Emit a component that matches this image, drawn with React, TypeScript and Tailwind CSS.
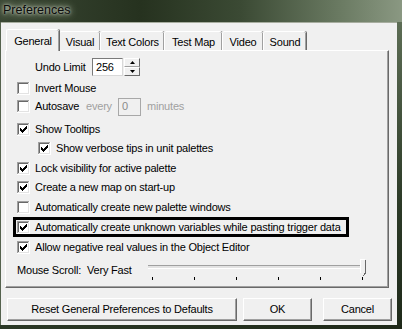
import React from "react";

const F = "font-['Liberation_Sans',Arial,sans-serif]";

function Check({ checked, disabled }: { checked?: boolean; disabled?: boolean }) {
  const rows: [number, number, number][] = [
    [9, 3, 1], [8, 4, 2], [3, 5, 1], [7, 5, 3], [3, 6, 2], [6, 6, 3], [3, 7, 5], [4, 8, 3], [5, 9, 1],
  ];
  return (
    <svg width="13" height="13" viewBox="0 0 13 13" shapeRendering="crispEdges" className="shrink-0">
      <rect x="0" y="0" width="13" height="13" fill="#ffffff" />
      <rect x="0" y="0" width="12" height="1" fill="#a0a0a0" />
      <rect x="0" y="0" width="1" height="12" fill="#a0a0a0" />
      <rect x="1" y="1" width="10" height="1" fill="#696969" />
      <rect x="1" y="1" width="1" height="10" fill="#696969" />
      <rect x="1" y="11" width="11" height="1" fill="#e3e3e3" />
      <rect x="11" y="1" width="1" height="11" fill="#e3e3e3" />
      <rect x="2" y="2" width="9" height="9" fill={disabled ? "#f0f0f0" : "#ffffff"} />
      {checked && rows.map(([x, y, w], i) => <rect key={i} x={x} y={y} width={w} height="1" fill="#000" />)}
    </svg>
  );
}

function CheckRow({ label, checked, indent = 11, mt, h = 18 }: { label: string; checked?: boolean; indent?: number; mt: string; h?: number }) {
  return (
    <div className={`flex items-center ${mt}`} style={{ height: h, paddingLeft: indent }}>
      <Check checked={checked} />
      <span className="ml-[5px] whitespace-nowrap">{label}</span>
    </div>
  );
}

function Tab({ label, w, selected }: { label: string; w: number; selected?: boolean }) {
  return (
    <div
      className={
        selected
          ? "relative z-10 -mb-px h-[22px] flex justify-center pt-[5px] bg-[#f0f0f0] border-l border-t border-white rounded-t-[2px] shadow-[inset_-1px_0_0_#a0a0a0,1px_0_0_#696969]"
          : "h-[19px] flex justify-center pt-[4px] bg-[#f0f0f0] border-l border-t border-white rounded-t-[2px] shadow-[inset_-1px_0_0_#a0a0a0,1px_0_0_#696969]"
      }
      style={{ width: w }}
    >
      <span className="whitespace-nowrap leading-[13px]">{label}</span>
    </div>
  );
}

function Button({ label, w }: { label: string; w: number }) {
  return (
    <div
      className="h-[23px] flex items-center justify-center bg-[#f0f0f0] border-l border-t border-white border-r border-b border-r-[#696969] border-b-[#696969] shadow-[inset_-1px_-1px_0_#a0a0a0]"
      style={{ width: w }}
    >
      <span className="whitespace-nowrap">{label}</span>
    </div>
  );
}

export default function App() {
  return (
    <div className={`w-[402px] h-[329px] overflow-hidden flex flex-col bg-[#25311f] text-[11px] tracking-[-0.2px] text-black ${F}`}>
      {/* title bar */}
      <div className="h-[22px] shrink-0 bg-[linear-gradient(90deg,#3a4734_0%,#26321f_35%,#3b4a34_60%,#6b7b63_85%,#8a9882_100%)] flex items-start">
        <span className="ml-[3px] mt-[3px] text-[12.5px] tracking-normal leading-[14px] text-[#0a0a0a] [text-shadow:0_0_3px_#cfd6c6,0_0_6px_#b8c1ad,0_0_10px_#9aa58e]">
          Preferences
        </span>
      </div>
      <div className="flex h-[303px] shrink-0">
        <div className="w-[1px] bg-[#55624e]" />
        {/* dialog body */}
        <div className="w-[396px] bg-[#f0f0f0] flex flex-col border-t border-[#a7ad9f]">
          {/* tabs */}
          <div className="ml-[5px] mt-[6px] h-[21px] flex items-end">
            <Tab label="General" w={53} selected />
            <Tab label="Visual" w={41} />
            <Tab label="Text Colors" w={64} />
            <Tab label="Test Map" w={58} />
            <Tab label="Video" w={41} />
            <Tab label="Sound" w={43} />
          </div>
          {/* panel */}
          <div className="ml-[4px] w-[384px] h-[238px] flex flex-col border-l border-t border-white border-r border-b border-r-[#696969] border-b-[#696969] shadow-[inset_-1px_-1px_0_#a0a0a0]">
            {/* Undo limit */}
            <div className="mt-[7px] h-[18px] flex items-center pl-[29px]">
              <span className="w-[57px] whitespace-nowrap">Undo Limit</span>
              <div className="w-[31px] h-[18px] bg-white border-l border-t border-[#7a7a7a] border-r border-b border-r-[#d8d8d8] border-b-[#d8d8d8] flex items-center pl-[3px]">
                256
              </div>
              <div className="ml-[1px] w-[16px] h-[18px] flex flex-col">
                <div className="h-[9px] flex items-center justify-center bg-[#f0f0f0] border-l border-t border-white border-r border-b border-r-[#696969] border-b-[#a0a0a0]">
                  <svg width="5" height="3" viewBox="0 0 5 3"><path d="M2.5 0 L5 3 L0 3 Z" fill="#000" /></svg>
                </div>
                <div className="h-[9px] flex items-center justify-center bg-[#f0f0f0] border-l border-t border-white border-r border-b border-r-[#696969] border-b-[#696969]">
                  <svg width="5" height="3" viewBox="0 0 5 3"><path d="M0 0 L5 0 L2.5 3 Z" fill="#000" /></svg>
                </div>
              </div>
            </div>
            <CheckRow label="Invert Mouse" mt="mt-[3px]" />
            {/* Autosave */}
            <div className="h-[19px] flex items-center pl-[11px]">
              <Check />
              <span className="ml-[5px] w-[51px] whitespace-nowrap">Autosave</span>
              <span className="w-[32px] text-[#a0a0a0] whitespace-nowrap">every</span>
              <div className="w-[23px] h-[18px] bg-[#f0f0f0] border border-[#a8a8a8] flex items-center pl-[3px] text-[#8a8a8a]">
                0
              </div>
              <span className="ml-[6px] text-[#a0a0a0] whitespace-nowrap">minutes</span>
            </div>
            <CheckRow label="Show Tooltips" checked mt="mt-[4px]" />
            <CheckRow label="Show verbose tips in unit palettes" checked indent={32} mt="mt-[1px]" />
            <CheckRow label="Lock visibility for active palette" checked mt="mt-[2px]" />
            <CheckRow label="Create a new map on start-up" checked mt="mt-[1px]" />
            <CheckRow label="Automatically create new palette windows" mt="mt-[2px]" />
            {/* highlighted row */}
            <div className="mt-[1px] ml-[7px] w-[336px] h-[20px] border-[3px] border-black flex items-center pl-[1px]">
              <Check checked />
              <span className="ml-[5px] whitespace-nowrap">Automatically create unknown variables while pasting trigger data</span>
            </div>
            <CheckRow label="Allow negative real values in the Object Editor" checked mt="mt-[1px]" />
            {/* mouse scroll */}
            <div className="mt-[3px] h-[20px] flex items-start pl-[11px]">
              <span className="mt-[3px] w-[70px] whitespace-nowrap">Mouse Scroll:</span>
              <span className="mt-[3px] w-[61px] whitespace-nowrap">Very Fast</span>
              <div className="w-[220px] flex flex-col">
                <div className="relative h-[17px]">
                  <div className="mt-[6px] w-[218px] h-[3px] border-t border-[#a0a0a0] bg-[#e3e3e3] shadow-[0_1px_0_#ffffff]" />
                  <svg className="absolute left-[212px] top-0" width="7" height="18" viewBox="0 0 7 18" shapeRendering="crispEdges">
                    <path d="M0.5 0.5 H5.5 V14 L3 17 L0.5 14 Z" fill="#f0f0f0" />
                    <path d="M0.5 14 V0.5 H5" stroke="#ffffff" fill="none" />
                    <path d="M5.5 0.5 V14 L3 17" stroke="#696969" fill="none" />
                  </svg>
                </div>
                <div className="ml-[4px] w-[211px] h-[3px] mt-[1px] flex justify-between">
                  {[0, 1, 2, 3, 4, 5].map((i) => (
                    <div key={i} className="w-[1px] h-[3px] bg-black" />
                  ))}
                </div>
              </div>
            </div>
          </div>
          {/* buttons */}
          <div className="mt-[10px] ml-[6px] flex">
            <Button label="Reset General Preferences to Defaults" w={230} />
            <div className="ml-[6px]"><Button label="OK" w={69} /></div>
            <div className="ml-[11px]"><Button label="Cancel" w={69} /></div>
          </div>
        </div>
        <div className="w-[5px] bg-[linear-gradient(180deg,#5d6d55_0%,#2c3a27_60%,#1f2a1a_100%)]" />
      </div>
      <div className="h-[4px] bg-[linear-gradient(90deg,#2b3826_0%,#1e2818_100%)]" />
    </div>
  );
}
